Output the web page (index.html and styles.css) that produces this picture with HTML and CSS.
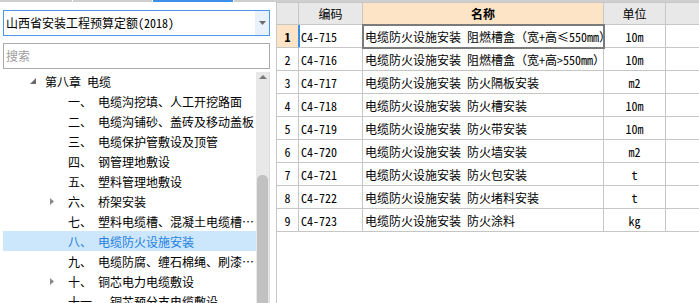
FILE: index.html
```html
<!DOCTYPE html>
<html lang="zh-CN">
<head>
<meta charset="utf-8">
<title>定额</title>
<link rel="stylesheet" href="styles.css">
</head>
<body>
<div class="tabs">
  <span class="tab tab-a"></span>
  <span class="tab tab-b"></span>
  <span class="tab tab-c"></span>
  <span class="tab tab-d"></span>
</div>
<div class="main">
  <aside class="side">
    <div class="combo">
      <span class="combo-text">山西省安装工程预算定额(2018)</span>
      <span class="combo-btn"><svg width="7" height="4" viewBox="0 0 7 4"><polygon points="0,0 7,0 3.5,4" fill="#6d6d6d"/></svg></span>
    </div>
    <div class="search">搜索</div>
    <div class="tree-wrap">
      <ul class="tree">
        <li class="node lv0"><span class="tw"><svg width="6" height="6" viewBox="0 0 6 6"><polygon points="6,0 6,6 0,6" fill="#6a6a6a"/></svg></span><span class="lbl">第八章 电缆</span></li>
        <li class="node lv1"><span class="tw"></span><span class="no">一、</span><span class="lbl">电缆沟挖填、人工开挖路面</span></li>
        <li class="node lv1"><span class="tw"></span><span class="no">二、</span><span class="lbl">电缆沟铺砂、盖砖及移动盖板</span></li>
        <li class="node lv1"><span class="tw"></span><span class="no">三、</span><span class="lbl">电缆保护管敷设及顶管</span></li>
        <li class="node lv1"><span class="tw"></span><span class="no">四、</span><span class="lbl">钢管理地敷设</span></li>
        <li class="node lv1"><span class="tw"></span><span class="no">五、</span><span class="lbl">塑料管理地敷设</span></li>
        <li class="node lv1"><span class="tw"><svg width="4" height="7" viewBox="0 0 4 7"><polygon points="0,0 4,3.5 0,7" fill="#8a8a8a"/></svg></span><span class="no">六、</span><span class="lbl">桥架安装</span></li>
        <li class="node lv1"><span class="tw"></span><span class="no">七、</span><span class="lbl">塑料电缆槽、混凝土电缆槽安装</span></li>
        <li class="node lv1 selected"><span class="tw"></span><span class="no">八、</span><span class="lbl">电缆防火设施安装</span></li>
        <li class="node lv1"><span class="tw"></span><span class="no">九、</span><span class="lbl">电缆防腐、缠石棉绳、刷漆、测位打眼</span></li>
        <li class="node lv1"><span class="tw"><svg width="4" height="7" viewBox="0 0 4 7"><polygon points="0,0 4,3.5 0,7" fill="#8a8a8a"/></svg></span><span class="no">十、</span><span class="lbl">铜芯电力电缆敷设</span></li>
        <li class="node lv1"><span class="tw"></span><span class="no">十一、</span><span class="lbl">铜芯预分支电缆敷设</span></li>
      </ul>
      <div class="vscroll">
        <svg class="up" width="8" height="4" viewBox="0 0 8 4"><polygon points="0,4 8,4 4,0" fill="#7a7a7a"/></svg>
        <div class="thumb"></div>
      </div>
    </div>
  </aside>
  <section class="panel">
    <div class="grid">
      <div class="c hd"></div><div class="c hd">编码</div><div class="c hd hd-name">名称</div><div class="c hd">单位</div><div class="c hd"></div>

      <div class="c num cur-num">1</div><div class="c code cur-code">C4-715</div><div class="c name cur-cell">电缆防火设施安装 阻燃槽盒（宽+高≤550mm）</div><div class="c unit">10m</div><div class="c"></div>
      <div class="c num">2</div><div class="c code">C4-716</div><div class="c name">电缆防火设施安装 阻燃槽盒（宽+高&gt;550mm）</div><div class="c unit">10m</div><div class="c"></div>
      <div class="c num">3</div><div class="c code">C4-717</div><div class="c name">电缆防火设施安装 防火隔板安装</div><div class="c unit">m2</div><div class="c"></div>
      <div class="c num">4</div><div class="c code">C4-718</div><div class="c name">电缆防火设施安装 防火槽安装</div><div class="c unit">10m</div><div class="c"></div>
      <div class="c num">5</div><div class="c code">C4-719</div><div class="c name">电缆防火设施安装 防火带安装</div><div class="c unit">10m</div><div class="c"></div>
      <div class="c num">6</div><div class="c code">C4-720</div><div class="c name">电缆防火设施安装 防火墙安装</div><div class="c unit">m2</div><div class="c"></div>
      <div class="c num">7</div><div class="c code">C4-721</div><div class="c name">电缆防火设施安装 防火包安装</div><div class="c unit">t</div><div class="c"></div>
      <div class="c num">8</div><div class="c code">C4-722</div><div class="c name">电缆防火设施安装 防火堵料安装</div><div class="c unit">t</div><div class="c"></div>
      <div class="c num">9</div><div class="c code">C4-723</div><div class="c name">电缆防火设施安装 防火涂料</div><div class="c unit">kg</div><div class="c"></div>
    </div>
  </section>
</div>
</body>
</html>
```

FILE: styles.css
```css
* { box-sizing: border-box; }
html, body {
  margin: 0;
  padding: 0;
  background: #fff;
  width: 699px;
  height: 303px;
  overflow: hidden;
  font-family: "Noto Sans Mono CJK SC", "Noto Sans CJK SC", "Liberation Mono", monospace;
  font-size: 12px;
  color: #000;
}

.tabs { display: flex; height: 2px; }
.tab { display: block; height: 2px; background: #cfcfcf; }
.tab-a { width: 72px; margin-right: 1px; }
.tab-b { width: 79px; margin-right: 1px; }
.tab-c { width: 80px; margin-right: 1px; background: #3d8ee6; }
.tab-d { flex: 1; }

.main { display: flex; height: 301px; }

.side {
  width: 270px;
  padding: 8px 0 0 3px;
  display: flex;
  flex-direction: column;
}

.combo {
  height: 26px;
  border: 1px solid #4d97e8;
  display: flex;
  align-items: stretch;
}
.combo-text {
  flex: 1;
  padding-left: 2px;
  line-height: 24px;
  white-space: nowrap;
}
.combo-btn {
  width: 14px;
  background: #e9f1fc;
  display: flex;
  align-items: center;
  justify-content: center;
}

.search {
  margin-top: 7px;
  height: 26px;
  border: 1px solid #ababab;
  padding-left: 2px;
  line-height: 24px;
  color: #9e9e9e;
}

.tree-wrap {
  margin-top: 2px;
  flex: 1;
  display: flex;
  overflow: hidden;
}
.tree {
  list-style: none;
  margin: 0;
  padding: 0;
  flex: 1;
  min-width: 0;
}
.node {
  display: flex;
  align-items: center;
  height: 20px;
  white-space: nowrap;
}
.node.lv0 { padding-left: 27px; }
.node.lv0 .tw { width: 15px; }
.node.lv1 { padding-left: 47px; }
.node.lv1 .tw { width: 18px; }
.tw { display: flex; align-items: center; flex: none; height: 20px; }
.no { flex: none; margin-right: 6px; }
.lbl {
  min-width: 0;
  overflow: hidden;
  text-overflow: ellipsis;
  white-space: nowrap;
}
.node.selected { background: #cce6fb; color: #1f7fe0; }

.vscroll {
  width: 14px;
  flex: none;
  margin-top: 1px;
  background: #e8e8e8;
  border-right: 1px solid #dcdcdc;
  display: flex;
  flex-direction: column;
  align-items: center;
  overflow: hidden;
}
.vscroll .up { margin-top: 3px; flex: none; }
.thumb {
  flex: none;
  margin-top: 96px;
  width: 11px;
  height: 200px;
  border-radius: 5px;
  background: #c1c1c1;
  margin-left: -1px;
}

.panel {
  flex: 1;
  margin-left: 6px;
  border-left: 1px solid #c6c6c6;
}

.grid {
  display: grid;
  grid-template-columns: 22px 64px 241px 62px 1fr;
  grid-auto-rows: 23px;
  grid-template-rows: 22px;
  border-top: 1px solid #c6c6c6;
}
.c {
  border-right: 1px solid #c6c6c6;
  border-bottom: 1px solid #c6c6c6;
  white-space: nowrap;
  overflow: visible;
  display: flex;
  align-items: center;
}
.c:nth-child(5n) { border-right: none; }
.hd {
  background: #e8e8e8;
  justify-content: center;
}
.hd-name { background: #fde4c6; font-weight: bold; }
.num { justify-content: center; }
.code { padding-left: 2px; }
.name { padding-left: 2px; }
.unit { justify-content: center; }

.cur-num { background: #fde4c6; font-weight: bold; border-right-color: #3a8ee6; }
.cur-code { box-shadow: inset 1px 0 0 #3a8ee6; }
.cur-cell { outline: 2px solid #7b7b7b; outline-offset: -1px; position: relative; z-index: 1; }
```
